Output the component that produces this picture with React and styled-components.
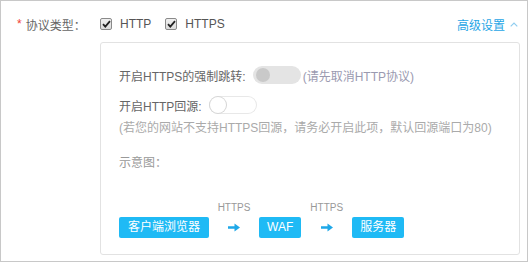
import React from "react";
import styled, { createGlobalStyle } from "styled-components";

const GlobalStyle = createGlobalStyle`
  body {
    margin: 0;
    background: #fff;
    font-family: "Liberation Sans", "Noto Sans CJK SC", sans-serif;
  }
`;

const Frame = styled.div`
  box-sizing: border-box;
  width: 528px;
  height: 262px;
  border: 1px solid #c8c8c8;
  display: flex;
  flex-direction: column;
`;

const TopRow = styled.div`
  display: flex;
  align-items: center;
  height: 18px;
  margin-top: 14px;
`;

const Label = styled.div`
  width: 99px;
  box-sizing: border-box;
  padding-left: 16px;
  font-size: 12px;
  color: #666;
  display: flex;
  align-items: center;
`;

const Star = styled.span`
  color: #f04134;
  margin-right: 4px;
  font-size: 12px;
`;

const Options = styled.div`
  flex: 1;
  display: flex;
  align-items: center;
  gap: 14px;
`;

const CheckLabel = styled.label`
  display: flex;
  align-items: center;
  gap: 8px;
  font-size: 12px;
  color: #555;
`;

const Box = styled.span`
  box-sizing: border-box;
  width: 12px;
  height: 12px;
  border: 1px solid #8a8a8a;
  border-radius: 2px;
  background: linear-gradient(#f0f0f0, #dcdcdc);
  display: flex;
  align-items: center;
  justify-content: center;
`;

const Advanced = styled.a`
  display: flex;
  align-items: center;
  gap: 5px;
  margin-right: 9px;
  font-size: 12px;
  color: #1fa6e6;
  text-decoration: none;
`;

const Card = styled.div`
  box-sizing: border-box;
  margin: 9px 7px 6px 99px;
  flex: 1;
  border: 1px solid #e2e2e2;
  border-radius: 3px;
  padding: 22px 18px 0;
  display: flex;
  flex-direction: column;
`;

const SwitchRow = styled.div`
  display: flex;
  align-items: center;
  height: 20px;
  margin-bottom: ${(p) => p.$gap || 0}px;
  font-size: 12px;
  color: #666;
`;

const Toggle = styled.span`
  box-sizing: border-box;
  width: 48px;
  height: 18px;
  border-radius: 9px;
  margin: 0 2px 0 7px;
  display: flex;
  align-items: center;
  padding: 0 ${(p) => (p.$disabled ? 3 : 1)}px;
  background: ${(p) => (p.$disabled ? "#e4e4e4" : "#fff")};
  box-shadow: ${(p) => (p.$disabled ? "none" : "inset 0 0 0 1px #e8e8e8")};
`;

const Knob = styled.span`
  box-sizing: border-box;
  width: ${(p) => (p.$disabled ? 14 : 16)}px;
  height: ${(p) => (p.$disabled ? 14 : 16)}px;
  border-radius: 50%;
  background: ${(p) => (p.$disabled ? "#c9c9c9" : "#fff")};
  box-shadow: ${(p) => (p.$disabled ? "none" : "0 0 0 1px #d6d6d6")};
`;

const Hint = styled.span`
  color: #9a9ab0;
  font-size: 12px;
`;

const Note = styled.div`
  height: 16px;
  line-height: 16px;
  font-size: 12px;
  color: #aaa;
  margin-top: 5px;
`;

const Caption = styled.div`
  height: 16px;
  line-height: 16px;
  font-size: 12px;
  color: #999;
  margin-top: 19px;
`;

const Diagram = styled.div`
  display: flex;
  align-items: flex-end;
  margin-top: 30px;
`;

const Node = styled.div`
  height: 21px;
  line-height: 21px;
  padding: 0 ${(p) => p.$pad || 8}px;
  background: #1fbaf5;
  border-radius: 2px;
  color: #fff;
  font-size: 12px;
`;

const Link = styled.div`
  width: ${(p) => p.$w}px;
  display: flex;
  flex-direction: column;
  align-items: center;
`;

const LinkLabel = styled.div`
  font-size: 10px;
  color: #999;
  height: 14px;
  line-height: 14px;
`;

const ArrowSlot = styled.div`
  height: 21px;
  display: flex;
  align-items: center;
  margin-top: 2px;
`;

const Arrow = () => (
  <svg width="12" height="9" viewBox="0 0 12 9">
    <path d="M0 3.2h6.5V0.5L12 4.5 6.5 8.5V5.8H0z" fill="#1fa8e8" />
  </svg>
);

const Check = () => (
  <svg width="9" height="8" viewBox="0 0 9 8">
    <path d="M1 4.2l2.3 2.4L8 1.2" stroke="#222" strokeWidth="1.8" fill="none" />
  </svg>
);

const App = () => (
  <>
    <GlobalStyle />
    <Frame>
      <TopRow>
        <Label>
          <Star>*</Star>协议类型：
        </Label>
        <Options>
          <CheckLabel>
            <Box><Check /></Box>HTTP
          </CheckLabel>
          <CheckLabel>
            <Box><Check /></Box>HTTPS
          </CheckLabel>
        </Options>
        <Advanced href="#">
          高级设置
          <svg width="8" height="5" viewBox="0 0 8 5">
            <path d="M0.7 4.3L4 1l3.3 3.3" stroke="#8fcdf0" strokeWidth="1.2" fill="none" />
          </svg>
        </Advanced>
      </TopRow>
      <Card>
        <SwitchRow $gap={10}>
          开启HTTPS的强制跳转:
          <Toggle $disabled><Knob $disabled /></Toggle>
          <Hint>(请先取消HTTP协议)</Hint>
        </SwitchRow>
        <SwitchRow>
          开启HTTP回源:
          <Toggle><Knob /></Toggle>
        </SwitchRow>
        <Note>(若您的网站不支持HTTPS回源，请务必开启此项，默认回源端口为80)</Note>
        <Caption>示意图：</Caption>
        <Diagram>
          <Node $pad={9}>客户端浏览器</Node>
          <Link $w={50}>
            <LinkLabel>HTTPS</LinkLabel>
            <ArrowSlot><Arrow /></ArrowSlot>
          </Link>
          <Node>WAF</Node>
          <Link $w={51}>
            <LinkLabel>HTTPS</LinkLabel>
            <ArrowSlot><Arrow /></ArrowSlot>
          </Link>
          <Node>服务器</Node>
        </Diagram>
      </Card>
    </Frame>
  </>
);

export default App;
